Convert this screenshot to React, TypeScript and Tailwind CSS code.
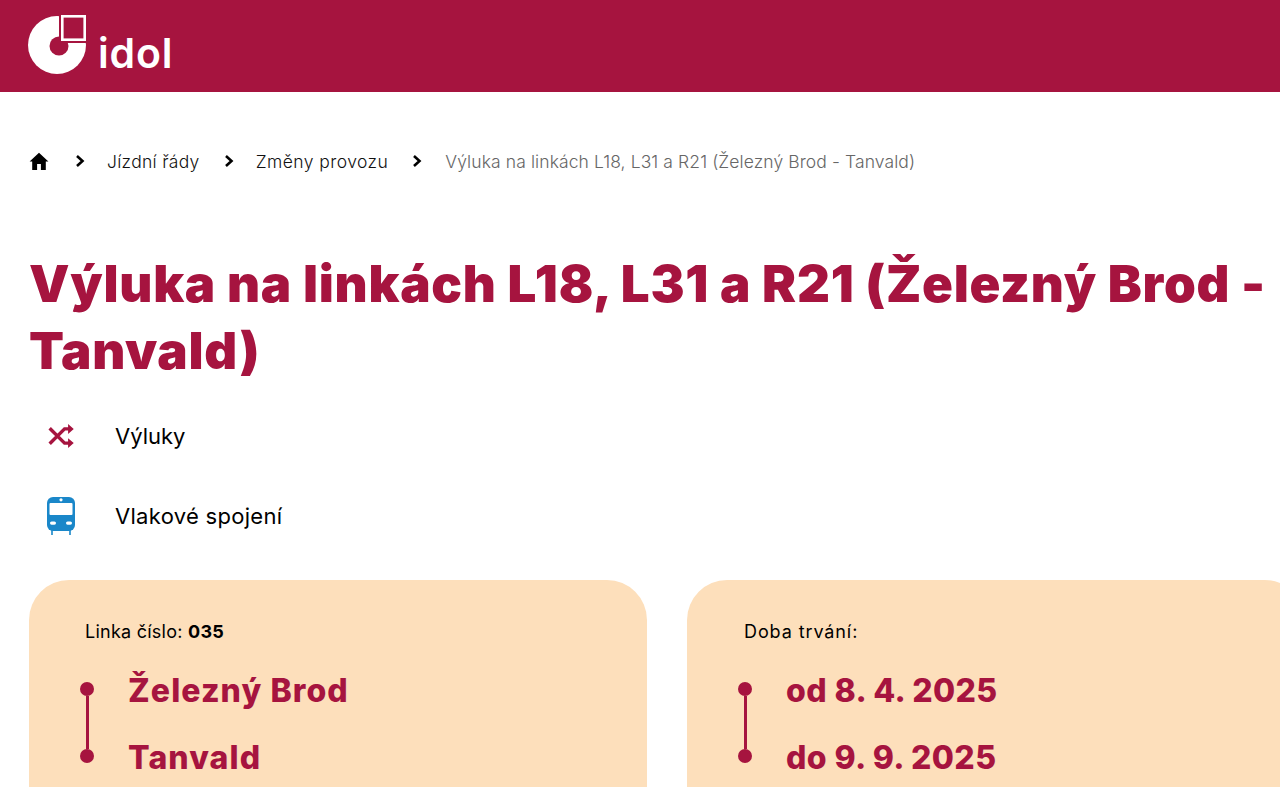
const RED = "text-[#a6143f]";

function Logo() {
  return (
    <div className="flex items-end h-[62px] mt-[-6px]">
      <svg width="60" height="60" viewBox="0 0 60 60" className="shrink-0">
        <circle cx="29" cy="31" r="29" fill="#fff" />
        <circle cx="31" cy="32" r="9.500" fill="#a6143f" />
        <rect x="31" y="0" width="29" height="29" fill="#a6143f" />
        <rect x="34.300" y="2.300" width="22.400" height="23.400" fill="#a6143f" stroke="#fff" strokeWidth="2.600" />
      </svg>
      <span className="text-white text-[41px] leading-[41px] font-semibold ml-[10px] tracking-[0.8px]">idol</span>
    </div>
  );
}

function Chevron() {
  return (
    <svg width="10" height="14" viewBox="0 0 10 14" className="shrink-0">
      <path d="M2 2l5.500 5L2 12" fill="none" stroke="#000" strokeWidth="2.600" />
    </svg>
  );
}

function Terminals({ a, b, wide }: { a: string; b: string; wide?: boolean }) {
  return (
    <div className="flex mt-[13px]">
      <div className="flex flex-col items-center w-[14px] mt-[25px] ml-[-5px]">
        <div className="w-[14px] h-[14px] rounded-full bg-[#a6143f]" />
        <div className="w-[3px] h-[53px] bg-[#a6143f]" />
        <div className="w-[14px] h-[14px] rounded-full bg-[#a6143f]" />
      </div>
      <div
        className={
          wide
            ? `ml-[34px] flex flex-col ${RED} font-extrabold text-[32px] leading-[67px] tracking-[1.1px]`
            : `ml-[34px] flex flex-col ${RED} font-extrabold text-[32px] leading-[67px] tracking-[0.4px]`
        }
      >
        <span>{a}</span>
        <span>{b}</span>
      </div>
    </div>
  );
}

function Card({ label, a, b, wide }: { label: React.ReactNode; a: string; b: string; wide?: boolean }) {
  return (
    <div className="w-[618px] shrink-0 h-[260px] bg-[#fddfbb] rounded-[40px] pl-[56px] pt-[40px]">
      <div className="text-[18px] leading-[24px] text-black">{label}</div>
      <Terminals a={a} b={b} wide={wide} />
    </div>
  );
}

export default function App() {
  return (
    <div className="w-[1280px] h-[787px] overflow-hidden bg-white font-['Inter',sans-serif]">
      <header className="h-[92px] bg-[#a6143f] flex items-center pl-[28px]">
        <Logo />
      </header>
      <nav className="flex items-center pl-[29px] mt-[57px] h-[24px] text-[17.500px] font-light text-[#111]">
        <svg width="20" height="18" viewBox="0 0 20 18" className="shrink-0">
          <path d="M10 .8L.6 9.400h2.600V18h4.900v-6h3.800v6h4.900V9.400h2.600z" fill="#000" />
        </svg>
        <span className="ml-[26px]"><Chevron /></span>
        <span className="ml-[22px] mt-[2px] tracking-[0.3px]">Jízdní řády</span>
        <span className="ml-[24px]"><Chevron /></span>
        <span className="ml-[22px] mt-[2px] tracking-[0.45px]">Změny provozu</span>
        <span className="ml-[24px]"><Chevron /></span>
        <span className="ml-[23px] mt-[2px] tracking-[0.1px] text-[#666]">Výluka na linkách L18, L31 a R21 (Železný Brod - Tanvald)</span>
      </nav>
      <h1 className={`${RED} font-black text-[51px] leading-[67px] ml-[29px] mt-[77px] w-[1245px] tracking-[0.75px]`}>
        Výluka na linkách L18, L31 a R21 (Železný Brod - Tanvald)
      </h1>
      <div className="ml-[29px] mt-[17px] flex flex-col">
        <div className="flex items-center h-[80px] -mt-[5px]">
          <svg width="34" height="34" viewBox="0 0 24 24" className="shrink-0 ml-[15px]">
            <path d="M4 6.500L14.500 17H18M4 17.500L14.500 7H18" fill="none" stroke="#a6143f" strokeWidth="2.400" />
            <path d="M17 3.500l4 3.500-4 3.500zM17 13.500l4 3.500-4 3.500z" fill="#a6143f" />
          </svg>
          <span className="ml-[37px] text-[22px] text-black">Výluky</span>
        </div>
        <div className="flex items-center h-[80px]">
          <svg width="30" height="40" viewBox="0 0 30 40" className="shrink-0 ml-[17px]">
            <path d="M6 34v5M24 34v5" stroke="#1a87c9" strokeWidth="1.600" />
            <rect x="1" y="1" width="28" height="34" rx="6" fill="#1a87c9" />
            <rect x="3.500" y="7" width="23" height="12" rx="1" fill="#fff" />
            <circle cx="15" cy="3.800" r="1.600" fill="#fff" />
            <rect x="4" y="25.500" width="6" height="3.200" rx="1.600" fill="#fff" />
            <rect x="20" y="25.500" width="6" height="3.200" rx="1.600" fill="#fff" />
          </svg>
          <span className="ml-[39px] text-[22px] tracking-[0.3px] text-black">Vlakové spojení</span>
        </div>
      </div>
      <div className="flex gap-[40px] ml-[29px] mt-[24px]">
        <Card label={<span className="tracking-[0.25px]">Linka číslo: <span className="font-bold">035</span></span>} a="Železný Brod" b="Tanvald" wide />
        <Card label={<span className="ml-[1px] tracking-[0.9px]">Doba trvání:</span>} a="od 8. 4. 2025" b="do 9. 9. 2025" />
      </div>
    </div>
  );
}
